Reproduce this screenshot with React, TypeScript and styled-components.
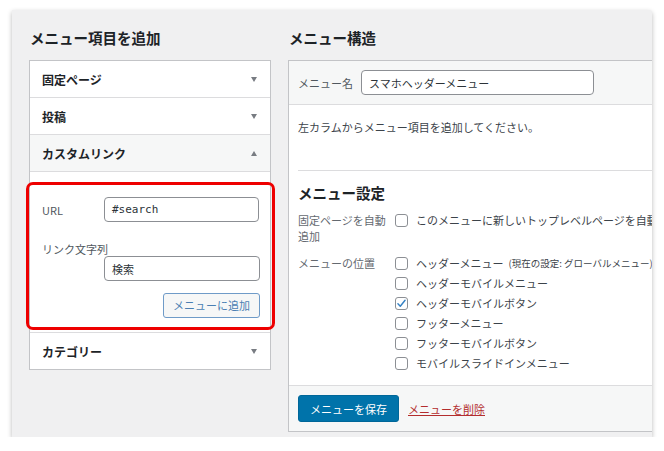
import React from "react";
import styled, { createGlobalStyle } from "styled-components";

const Global = createGlobalStyle`
  html, body { margin: 0; padding: 0; background: #fff; }
  body { font-family: "Noto Sans CJK JP", "Noto Sans", sans-serif; color: #3c434a; }
  * { box-sizing: border-box; }
`;

const Frame = styled.div`
  margin: 10px 0 0 12px;
  width: 640px;
  height: 427px;
  background: #f0f0f1;
  box-shadow: 0 2px 5px rgba(0, 0, 0, 0.28);
  border-radius: 0 3px 0 0;
  overflow: hidden;
  display: flex;
  align-items: flex-start;
  gap: 17px;
  padding: 18px 0 0 17px;
`;

const Column = styled.div<{ $width: number }>`
  flex: none;
  width: ${(p) => p.$width}px;
  display: flex;
  flex-direction: column;
`;

const Heading = styled.h2`
  margin: 0 0 12px 1px;
  font-size: 14.5px;
  line-height: 20px;
  font-weight: 700;
  color: #1d2327;
  white-space: nowrap;
`;

const Accordion = styled.div`
  border: 1px solid #c3c4c7;
  background: #fff;
`;

const SectionHead = styled.div<{ $open?: boolean; $last?: boolean }>`
  height: ${(p) => (p.$last ? 36 : 37)}px;
  display: flex;
  align-items: center;
  justify-content: space-between;
  padding: 0 13px 0 12px;
  border-bottom: ${(p) => (p.$last ? "none" : "1px solid #dcdcde")};
  background: ${(p) => (p.$open ? "#f6f7f7" : "#fff")};
  font-size: 12px;
  font-weight: 700;
  color: #1d2327;
`;

const Arrow = styled.span<{ $up?: boolean }>`
  width: 0;
  height: 0;
  border-left: 3.5px solid transparent;
  border-right: 3.5px solid transparent;
  ${(p) =>
    p.$up ? "border-bottom: 5px solid #787c82;" : "border-top: 5px solid #787c82;"}
`;

const SectionBody = styled.div`
  position: relative;
  padding: 25px 11px 14px 12px;
  border-bottom: 1px solid #dcdcde;
`;

const Highlight = styled.div`
  position: absolute;
  top: 10px;
  left: -4px;
  right: -5px;
  bottom: 2px;
  border: 3px solid #ee0000;
  border-radius: 7px;
  pointer-events: none;
`;

const FieldRow = styled.div`
  display: flex;
  align-items: center;
`;

const FieldLabel = styled.label<{ $block?: boolean }>`
  font-size: 11px;
  line-height: 14px;
  color: #50575e;
  ${(p) => (p.$block ? "display: block; margin-top: 20px;" : "width: 62px; flex: none;")}
`;

const TextInput = styled.div<{ $width: number; $mono?: boolean; $indent?: number }>`
  width: ${(p) => p.$width}px;
  height: 25px;
  margin-left: ${(p) => p.$indent ?? 0}px;
  border: 1px solid #8c8f94;
  border-radius: 4px;
  background: #fff;
  padding: 0 7px;
  display: flex;
  align-items: center;
  color: #2c3338;
  white-space: nowrap;
  font-size: 11px;
  font-family: ${(p) =>
    p.$mono
      ? '"DejaVu Sans Mono", "Liberation Mono", monospace'
      : '"Noto Sans CJK JP", "Noto Sans", sans-serif'};
`;

const ButtonRow = styled.div`
  display: flex;
  justify-content: flex-end;
  margin: 12px -1px 0 0;
`;

const SecondaryButton = styled.button`
  height: 25px;
  padding: 0 9px;
  border: 1px solid #6f9bc8;
  border-radius: 3px;
  background: #f6f7f7;
  color: #4b7fb3;
  font-family: "Noto Sans CJK JP", "Noto Sans", sans-serif;
  font-size: 11px;
  line-height: 23px;
`;

const Panel = styled.div`
  width: 420px;
  border: 1px solid #c3c4c7;
  background: #fff;
`;

const PanelHeader = styled.div`
  display: flex;
  align-items: center;
  gap: 8px;
  padding: 9px 9px;
  background: #f6f7f7;
  border-bottom: 1px solid #dcdcde;
`;

const SmallLabel = styled.span`
  font-size: 11px;
  color: #50575e;
`;

const PanelBody = styled.div`
  padding: 14px 0 12px 9px;
`;

const Instructions = styled.p`
  margin: 0;
  font-size: 11px;
  line-height: 16px;
  color: #3c434a;
`;

const Settings = styled.div`
  margin-top: 35px;
  border-top: 1px solid #dcdcde;
  padding-top: 12px;
`;

const SubHeading = styled.h3`
  margin: 0;
  font-size: 14.5px;
  line-height: 20px;
  font-weight: 700;
  color: #1d2327;
`;

const SettingRow = styled.div<{ $lh: number }>`
  display: grid;
  grid-template-columns: 97px 1fr;
  margin-top: 9px;
  line-height: ${(p) => p.$lh}px;
  font-size: 11px;
`;

const SettingLabel = styled.div`
  color: #646970;
`;

const OptionList = styled.div`
  display: flex;
  flex-direction: column;
  min-width: 0;
  overflow: hidden;
`;

const Option = styled.div<{ $h: number }>`
  height: ${(p) => p.$h}px;
  display: flex;
  align-items: center;
  gap: 8px;
  white-space: nowrap;
  color: #3c434a;
`;

const Box = styled.span`
  flex: none;
  width: 13px;
  height: 13px;
  border: 1px solid #8c8f94;
  border-radius: 3px;
  background: #fff;
  display: flex;
  align-items: center;
  justify-content: center;
`;

const Note = styled.span`
  font-size: 9.5px;
  margin-left: -3px;
  color: #3c434a;
`;

const PanelFooter = styled.div`
  display: flex;
  align-items: center;
  gap: 9px;
  padding: 9px;
  background: #f6f7f7;
  border-top: 1px solid #dcdcde;
`;

const PrimaryButton = styled.button`
  height: 27px;
  padding: 0 11px;
  border: 1px solid #006799;
  border-radius: 3px;
  background: #0073aa;
  color: #fff;
  font-family: "Noto Sans CJK JP", "Noto Sans", sans-serif;
  font-size: 11px;
`;

const DeleteLink = styled.a`
  font-size: 11px;
  color: #b32d2e;
  text-decoration: underline;
`;

const Check = ({ checked }: { checked?: boolean }) => (
  <Box>
    {checked && (
      <svg width="11" height="11" viewBox="0 0 20 20">
        <path d="M3.5 10.5 L7.8 15 L16.5 4" fill="none" stroke="#3582c4" strokeWidth="2.6" strokeLinecap="round" strokeLinejoin="round" />
      </svg>
    )}
  </Box>
);

const locations = [
  { label: "ヘッダーメニュー", note: "(現在の設定: グローバルメニュー)" },
  { label: "ヘッダーモバイルメニュー" },
  { label: "ヘッダーモバイルボタン", checked: true },
  { label: "フッターメニュー" },
  { label: "フッターモバイルボタン" },
  { label: "モバイルスライドインメニュー" },
];

export default function App() {
  return (
    <>
      <Global />
      <Frame>
        <Column $width={242}>
          <Heading>メニュー項目を追加</Heading>
          <Accordion>
            <SectionHead>
              固定ページ
              <Arrow />
            </SectionHead>
            <SectionHead>
              投稿
              <Arrow />
            </SectionHead>
            <SectionHead $open>
              カスタムリンク
              <Arrow $up />
            </SectionHead>
            <SectionBody>
              <FieldRow>
                <FieldLabel>URL</FieldLabel>
                <TextInput $width={156} $mono>
                  #search
                </TextInput>
              </FieldRow>
              <FieldLabel $block>リンク文字列</FieldLabel>
              <TextInput $width={156} $indent={62}>
                検索
              </TextInput>
              <ButtonRow>
                <SecondaryButton>メニューに追加</SecondaryButton>
              </ButtonRow>
              <Highlight />
            </SectionBody>
            <SectionHead $last>
              カテゴリー
              <Arrow />
            </SectionHead>
          </Accordion>
        </Column>
        <Column $width={420}>
          <Heading>メニュー構造</Heading>
          <Panel>
            <PanelHeader>
              <SmallLabel>メニュー名</SmallLabel>
              <TextInput $width={233}>スマホヘッダーメニュー</TextInput>
            </PanelHeader>
            <PanelBody>
              <Instructions>左カラムからメニュー項目を追加してください。</Instructions>
              <Settings>
                <SubHeading>メニュー設定</SubHeading>
                <SettingRow $lh={16}>
                  <SettingLabel>
                    固定ページを自動
                    <br />
                    追加
                  </SettingLabel>
                  <OptionList>
                    <Option $h={16}>
                      <Check />
                      このメニューに新しいトップレベルページを自動で追加
                    </Option>
                  </OptionList>
                </SettingRow>
                <SettingRow $lh={20}>
                  <SettingLabel>メニューの位置</SettingLabel>
                  <OptionList>
                    {locations.map((l) => (
                      <Option $h={20} key={l.label}>
                        <Check checked={l.checked} />
                        {l.label}
                        {l.note && <Note>{l.note}</Note>}
                      </Option>
                    ))}
                  </OptionList>
                </SettingRow>
              </Settings>
            </PanelBody>
            <PanelFooter>
              <PrimaryButton>メニューを保存</PrimaryButton>
              <DeleteLink>メニューを削除</DeleteLink>
            </PanelFooter>
          </Panel>
        </Column>
      </Frame>
    </>
  );
}
